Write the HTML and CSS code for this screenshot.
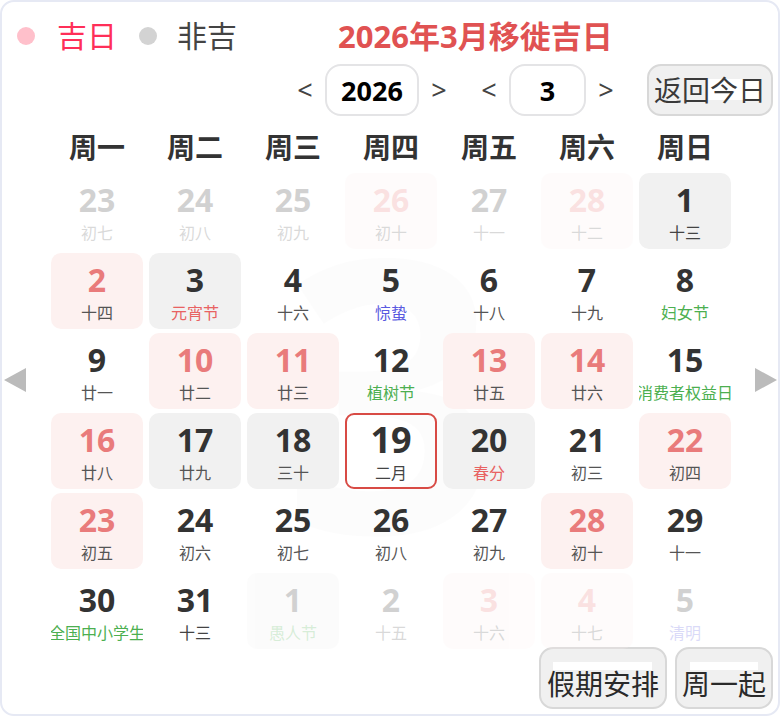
FILE: index.html
```html
<!DOCTYPE html>
<html lang="zh-CN">
<head>
<meta charset="utf-8">
<title>2026年3月移徙吉日</title>
<link rel="stylesheet" href="styles.css">
</head>
<body>
<div class="cal">
  <div class="top">
    <div class="legend">
      <span class="dot dot-good"></span><span class="lg lg-good">吉日</span>
      <span class="dot dot-bad"></span><span class="lg lg-bad">非吉</span>
    </div>
    <div class="title">2026年3月移徙吉日</div>
  </div>

  <div class="controls">
    <span class="chev">&lt;</span>
    <div class="box box-year">2026</div>
    <span class="chev">&gt;</span>
    <span class="chev chev-gap">&lt;</span>
    <div class="box box-month">3</div>
    <span class="chev">&gt;</span>
    <button class="btn btn-today">返回今日</button>
  </div>

  <div class="body">
    <svg class="arrow arrow-left" width="22" height="24" viewBox="0 0 22 24"><polygon points="0,12 22,0 22,24" fill="#bbbbbb"/></svg>
    <div class="main">
      <div class="week">
        <div>周一</div><div>周二</div><div>周三</div><div>周四</div><div>周五</div><div>周六</div><div>周日</div>
      </div>
      <div class="grid">
        <div class="watermark">3</div>

        <div class="cell other"><div class="num">23</div><div class="lunar">初七</div></div>
        <div class="cell other"><div class="num">24</div><div class="lunar">初八</div></div>
        <div class="cell other"><div class="num">25</div><div class="lunar">初九</div></div>
        <div class="cell other lucky"><div class="num">26</div><div class="lunar">初十</div></div>
        <div class="cell other"><div class="num">27</div><div class="lunar">十一</div></div>
        <div class="cell other lucky"><div class="num">28</div><div class="lunar">十二</div></div>
        <div class="cell gray"><div class="num">1</div><div class="lunar dark">十三</div></div>

        <div class="cell lucky"><div class="num">2</div><div class="lunar">十四</div></div>
        <div class="cell gray"><div class="num">3</div><div class="lunar red">元宵节</div></div>
        <div class="cell"><div class="num">4</div><div class="lunar">十六</div></div>
        <div class="cell"><div class="num">5</div><div class="lunar blue">惊蛰</div></div>
        <div class="cell"><div class="num">6</div><div class="lunar">十八</div></div>
        <div class="cell"><div class="num">7</div><div class="lunar">十九</div></div>
        <div class="cell"><div class="num">8</div><div class="lunar green">妇女节</div></div>

        <div class="cell"><div class="num">9</div><div class="lunar">廿一</div></div>
        <div class="cell lucky"><div class="num">10</div><div class="lunar">廿二</div></div>
        <div class="cell lucky"><div class="num">11</div><div class="lunar">廿三</div></div>
        <div class="cell"><div class="num">12</div><div class="lunar green">植树节</div></div>
        <div class="cell lucky"><div class="num">13</div><div class="lunar">廿五</div></div>
        <div class="cell lucky"><div class="num">14</div><div class="lunar">廿六</div></div>
        <div class="cell"><div class="num">15</div><div class="lunar green">消费者权益日</div></div>

        <div class="cell lucky"><div class="num">16</div><div class="lunar">廿八</div></div>
        <div class="cell gray"><div class="num">17</div><div class="lunar">廿九</div></div>
        <div class="cell gray"><div class="num">18</div><div class="lunar">三十</div></div>
        <div class="cell today"><div class="num">19</div><div class="lunar dark">二月</div></div>
        <div class="cell gray"><div class="num">20</div><div class="lunar red">春分</div></div>
        <div class="cell"><div class="num">21</div><div class="lunar">初三</div></div>
        <div class="cell lucky"><div class="num">22</div><div class="lunar">初四</div></div>

        <div class="cell lucky"><div class="num">23</div><div class="lunar">初五</div></div>
        <div class="cell"><div class="num">24</div><div class="lunar">初六</div></div>
        <div class="cell"><div class="num">25</div><div class="lunar">初七</div></div>
        <div class="cell"><div class="num">26</div><div class="lunar">初八</div></div>
        <div class="cell"><div class="num">27</div><div class="lunar">初九</div></div>
        <div class="cell lucky"><div class="num">28</div><div class="lunar">初十</div></div>
        <div class="cell"><div class="num">29</div><div class="lunar">十一</div></div>

        <div class="cell"><div class="num">30</div><div class="lunar green">全国中小学生</div></div>
        <div class="cell"><div class="num">31</div><div class="lunar dark">十三</div></div>
        <div class="cell other gray"><div class="num">1</div><div class="lunar green">愚人节</div></div>
        <div class="cell other"><div class="num">2</div><div class="lunar">十五</div></div>
        <div class="cell other lucky"><div class="num">3</div><div class="lunar">十六</div></div>
        <div class="cell other lucky"><div class="num">4</div><div class="lunar">十七</div></div>
        <div class="cell other"><div class="num">5</div><div class="lunar blue">清明</div></div>
      </div>
    </div>
    <svg class="arrow arrow-right" width="22" height="24" viewBox="0 0 22 24"><polygon points="22,12 0,0 0,24" fill="#bbbbbb"/></svg>
  </div>

  <div class="footer">
    <button class="btn btn-holiday">假期安排</button>
    <button class="btn btn-monday">周一起</button>
  </div>
</div>
</body>
</html>
```

FILE: styles.css
```css
* { box-sizing: border-box; }

html, body {
  margin: 0;
  padding: 0;
  background: #ffffff;
}

body {
  font-family: "Noto Sans", "Noto Sans CJK SC", sans-serif;
  color: #333333;
}

.cal {
  position: relative;
  z-index: 0;
  width: 780px;
  height: 716px;
  border: 2px solid #e6e9f4;
  border-radius: 14px;
  background: #ffffff;
  overflow: hidden;
}

/* ---------- top row ---------- */
.top {
  display: flex;
  align-items: center;
  height: 40px;
  margin-top: 14px;
  padding-left: 15px;
}

.legend {
  display: flex;
  align-items: center;
}

.dot {
  width: 18px;
  height: 18px;
  border-radius: 50%;
}
.dot-good { background: #ffc0cb; margin-right: 22px; }
.dot-bad  { background: #d3d3d3; margin-right: 20px; }

.lg {
  font-size: 30px;
  line-height: 40px;
}
.lg-good { color: #ff2f58; margin-right: 22px; }
.lg-bad  { color: #444444; }

.title {
  margin-left: 101px;
  font-size: 31px;
  line-height: 40px;
  font-weight: 700;
  color: #e05252;
}

/* ---------- controls ---------- */
.controls {
  display: flex;
  align-items: center;
  justify-content: flex-end;
  height: 52px;
  margin-top: 8px;
  padding-right: 5px;
}

.chev {
  width: 28px;
  text-align: center;
  font-size: 27px;
  color: #444444;
  line-height: 52px;
}
.chev-gap { margin-left: 22px; }

.box {
  height: 52px;
  margin: 0 6px;
  border: 2px solid #e4e4e6;
  border-radius: 16px;
  display: flex;
  align-items: center;
  justify-content: center;
  font-size: 27px;
  font-weight: 700;
  color: #000000;
}
.box-year  { width: 94px; }
.box-month { width: 77px; }

.btn {
  font-family: "Noto Sans", "Noto Sans CJK SC", sans-serif;
  font-size: 28px;
  color: #2a2a2a;
  background-color: #f0f0f0;
  background-image: linear-gradient(#ffffff, #ffffff);
  background-repeat: no-repeat;
  border: 2px solid #d8d8d8;
  border-radius: 14px;
  margin: 0;
}

.btn-today {
  height: 52px;
  margin-left: 27px;
  padding: 0 5px;
  line-height: 44px;
  color: #3a3a3a;
  background-size: 54px 21px;
  background-position: 57px 13px;
}

/* ---------- body ---------- */
.body {
  display: flex;
  align-items: center;
  padding: 0 1px 0 2px;
}

.arrow {
  flex: none;
  margin-top: -6px;
}
.arrow-left  { margin-right: 25px; }
.arrow-right { margin-left: 24px; }

.main {
  width: 680px;
}

.week {
  display: grid;
  grid-template-columns: repeat(7, 92px);
  column-gap: 6px;
  height: 40px;
  margin-top: 11px;
}
.week div {
  text-align: center;
  font-size: 28px;
  line-height: 40px;
  font-weight: 700;
  color: #333333;
}

.grid {
  position: relative;
  display: grid;
  grid-template-columns: repeat(7, 92px);
  grid-auto-rows: 76px;
  gap: 4px 6px;
  margin-top: 6px;
}

.watermark {
  position: absolute;
  z-index: -1;
  left: 0;
  right: 0;
  top: 23px;
  text-align: center;
  font-size: 380px;
  line-height: 1;
  font-weight: 700;
  color: rgba(0, 0, 0, 0.012);
}

.cell {
  border-radius: 10px;
  display: flex;
  flex-direction: column;
  align-items: center;
  padding-top: 9px;
  overflow: hidden;
}

.num {
  font-size: 32px;
  line-height: 36px;
  height: 36px;
  font-weight: 700;
  color: #333333;
  white-space: nowrap;
}

.lunar {
  margin-top: 5px;
  font-size: 16px;
  line-height: 20px;
  color: #555555;
  white-space: nowrap;
  flex: none;
}

.lunar.dark  { color: #444444; }
.lunar.red   { color: #e86262; }
.lunar.green { color: #4caf50; }
.lunar.blue  { color: #5a5ae0; }

.cell.lucky { background: #fdf1f0; }
.cell.lucky .num { color: #e97b7b; }

.cell.gray { background: #f1f1f1; }

.cell.other { opacity: 0.22; }

.cell.today {
  border: 2px solid #d84b45;
  border-radius: 9px;
  padding-top: 6px;
}
.cell.today .num {
  font-size: 36px;
  line-height: 38px;
  height: 38px;
}
.cell.today .lunar { margin-top: 4px; }

/* ---------- footer ---------- */
.footer {
  display: flex;
  justify-content: flex-end;
  gap: 8px;
  margin-top: -2px;
  padding-right: 5px;
}

.footer .btn {
  height: 62px;
  padding-top: 12px;
  line-height: 40px;
}

.btn-holiday {
  padding-left: 6px;
  padding-right: 6px;
  background-size: 99px 8px;
  background-position: 12px 13px;
}

.btn-monday {
  padding-left: 5px;
  padding-right: 5px;
  background-size: 68px 8px;
  background-position: 13px 13px;
}
```
